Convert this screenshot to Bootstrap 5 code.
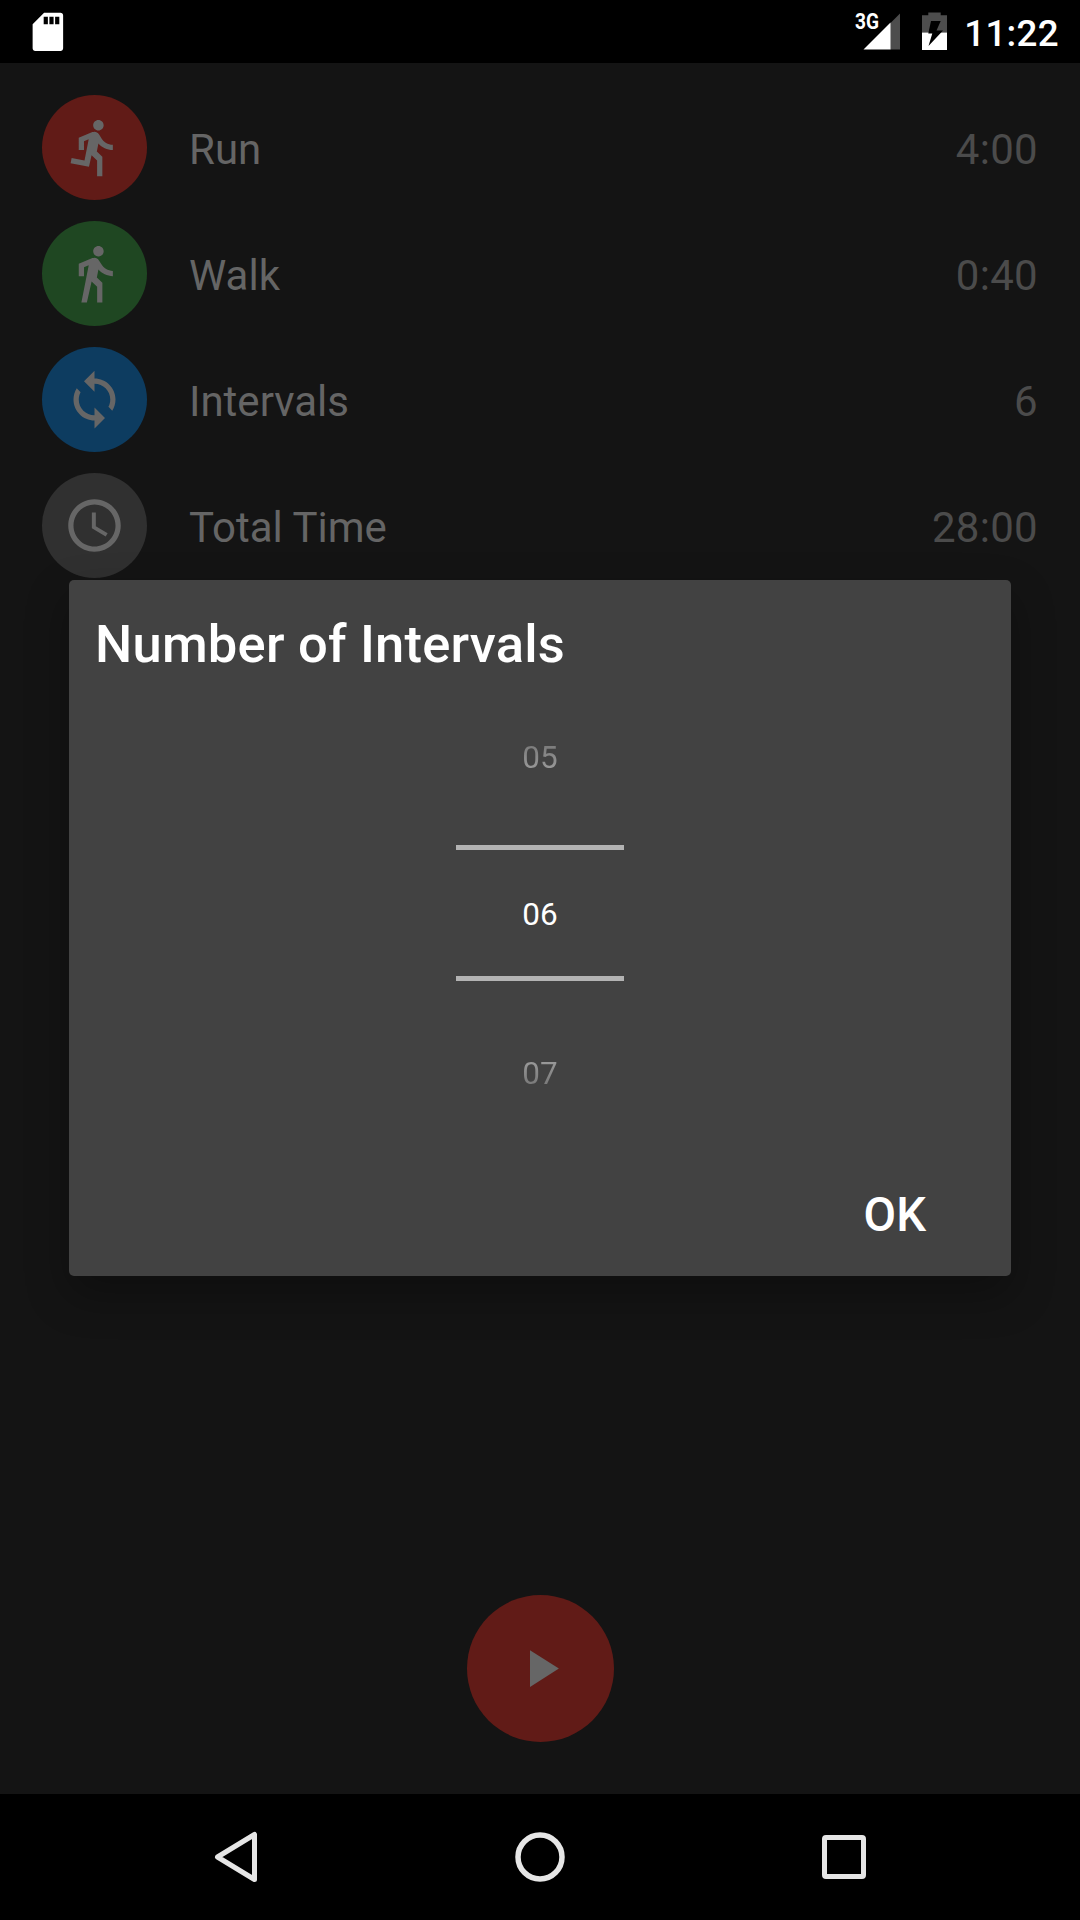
<!DOCTYPE html>
<html lang="en" data-bs-theme="dark">
<head>
<meta charset="utf-8">
<meta name="viewport" content="width=device-width, initial-scale=1">
<title>Interval Timer</title>
<link href="https://cdn.jsdelivr.net/npm/bootstrap@5.3.0/dist/css/bootstrap.min.css" rel="stylesheet">
<style>
  body { font-family: Roboto, "Liberation Sans", sans-serif; background: #000; color: #fff; }
  svg { display: block; flex: none; }
  .status-strip { height: 63px; padding: 0 21px 0 25px; background: #000; }
  .status-clock { font-size: 36.75px; font-weight: 500; line-height: 43px; margin-left: 17.5px; padding-top: 3px; letter-spacing: .3px; }
  .screen { background: #141414; }
  .timer-list { padding: 21px 42px 0; }
  .timer-row { height: 126px; }
  .timer-icon { width: 105px; height: 105px; margin-top: 1px; color: #666; }
  .bg-run { background: #611b17; }
  .bg-walk { background: #1f4722; }
  .bg-cycle { background: #0d3c60; }
  .bg-total { background: #303030; }
  .timer-name, .timer-value { font-size: 42px; line-height: 50px; padding-top: 5px; }
  .timer-name { margin-left: 42px; color: #656565; }
  .timer-value { color: #4b4b4b; letter-spacing: .3px; }
  .start-btn { width: 147px; height: 147px; margin-bottom: 52px; background: #611b17; color: #666; }
  .picker-layer { padding-bottom: 2px; }
  .picker-dialog { width: 942px; height: 696px; border-radius: 5px; background: #424242; box-shadow: 0 18px 44px rgba(0,0,0,.3); }
  .picker-title { font-size: 52.5px; line-height: 62px; font-weight: 500; letter-spacing: .22px; padding: 33px 26px 0; }
  .number-wheel { width: 168px; margin-top: 33px; font-size: 31.5px; line-height: 38px; }
  .wheel-side { height: 137px; padding-top: 31px; color: transparent; -webkit-background-clip: text; background-clip: text; }
  .wheel-prev { background-image: linear-gradient(#7b7b7b 37px, #9a9a9a 62px); }
  .wheel-next { padding-top: 74px; background-image: linear-gradient(#9a9a9a 80px, #767676 106px); }
  .wheel-current { height: 136px; padding-top: 4px; border-top: 5px solid #b3b3b3; border-bottom: 5px solid #b3b3b3; }
  .ok-btn { font-size: 47.25px; line-height: 56px; font-weight: 500; color: #fff; padding: 0; border: 0; margin: 0 85px 33px 0; }
  .nav-strip { height: 126px; background: #000; }
  .nav-key { width: 304px; }
</style>
</head>
<body>
<div class="vh-100 d-flex flex-column overflow-hidden">
  <header class="status-strip d-flex align-items-center flex-shrink-0">
    <svg width="45.75" height="45.75" viewBox="0 0 24 24" fill="#fff"><path d="M18.600 2H10L4 8v12.600c0 .8.6 1.400 1.400 1.400h13.200c.8 0 1.400-.6 1.400-1.400V3.400C20 2.600 19.400 2 18.600 2zM12 8H9.800V4H12zm3 0h-2.200V4H15zm3 0h-2.200V4H18z"/></svg>
    <svg class="ms-auto" width="50" height="51" viewBox="-4 -6 50 51">
      <path fill="#4d4d4d" d="M36 11.500 46 1.500V37.500H36z"/>
      <path fill="#fff" d="M9.500 37.500 36.500 10.500V37.500z"/>
      <text x="1" y="17.300" fill="#fff" font-family="Roboto, sans-serif" font-weight="700" font-size="21.500" textLength="24" lengthAdjust="spacingAndGlyphs">3G</text>
    </svg>
    <svg width="25" height="39" viewBox="0 0 25 39" style="margin-left:22px">
      <path fill="#4d4d4d" d="M6.300 3.200V.5H18.700V3.200H25V20.500H0V3.200z"/>
      <path fill="#fff" d="M0 20.500H25V38H0z"/>
      <path fill="#000" d="M9 9H18.700L14.500 18.500H21L6.500 34 10.300 21.500H6.300z"/>
    </svg>
    <div class="status-clock">11:22</div>
  </header>

  <main class="screen position-relative flex-grow-1 d-flex flex-column">
    <div class="timer-list">
      <div class="timer-row d-flex align-items-center">
        <div class="timer-icon bg-run rounded-circle d-flex align-items-center justify-content-center">
          <svg width="63" height="63" viewBox="0 0 24 24" fill="currentColor"><path d="M13.490 5.480c1.100 0 2-.9 2-2s-.9-2-2-2-2 .9-2 2 .9 2 2 2zm-3.600 13.900l1-4.400 2.100 2v6h2v-7.500l-2.100-2 .6-3c1.300 1.500 3.300 2.500 5.500 2.500v-2c-1.900 0-3.500-1-4.300-2.400l-1-1.600c-.4-.6-1-1-1.700-1-.3 0-.5.1-.8.1l-5.200 2.200v4.700h2v-3.400l1.800-.7-1.600 8.100-4.900-1-.4 2 7 1.400z"/></svg>
        </div>
        <div class="timer-name">Run</div><div class="timer-value ms-auto">4:00</div>
      </div>
      <div class="timer-row d-flex align-items-center">
        <div class="timer-icon bg-walk rounded-circle d-flex align-items-center justify-content-center">
          <svg width="63" height="63" viewBox="0 0 24 24" fill="currentColor"><path d="M13.500 5.500c1.100 0 2-.9 2-2s-.9-2-2-2-2 .9-2 2 .9 2 2 2zM9.800 8.900L7 23h2.100l1.800-8 2.100 2v6h2v-7.500l-2.100-2 .6-3C14.800 12 16.800 13 19 13v-2c-1.900 0-3.500-1-4.300-2.400l-1-1.600c-.4-.6-1-1-1.700-1-.3 0-.5.1-.8.1L6 8.300V13h2V9.600l1.800-.7"/></svg>
        </div>
        <div class="timer-name">Walk</div><div class="timer-value ms-auto">0:40</div>
      </div>
      <div class="timer-row d-flex align-items-center">
        <div class="timer-icon bg-cycle rounded-circle d-flex align-items-center justify-content-center">
          <svg width="63" height="63" viewBox="0 0 24 24" fill="currentColor"><path d="M12 4V1L8 5l4 4V6c3.310 0 6 2.690 6 6 0 1.010-.25 1.970-.7 2.800l1.460 1.460C19.540 15.030 20 13.570 20 12c0-4.420-3.580-8-8-8zm0 14c-3.310 0-6-2.690-6-6 0-1.010.25-1.970.7-2.800L5.240 7.740C4.460 8.970 4 10.430 4 12c0 4.420 3.580 8 8 8v3l4-4-4-4v3z"/></svg>
        </div>
        <div class="timer-name">Intervals</div><div class="timer-value ms-auto">6</div>
      </div>
      <div class="timer-row d-flex align-items-center">
        <div class="timer-icon bg-total rounded-circle d-flex align-items-center justify-content-center">
          <svg width="63" height="63" viewBox="0 0 24 24" fill="currentColor"><path d="M11.990 2C6.470 2 2 6.480 2 12s4.470 10 9.990 10C17.520 22 22 17.520 22 12S17.520 2 11.990 2zM12 20c-4.420 0-8-3.580-8-8s3.580-8 8-8 8 3.580 8 8-3.580 8-8 8z"/><path d="M12.500 7H11v6l5.250 3.150.75-1.230-4.500-2.670z"/></svg>
        </div>
        <div class="timer-name">Total Time</div><div class="timer-value ms-auto">28:00</div>
      </div>
    </div>

    <button class="start-btn btn p-0 border-0 rounded-circle mt-auto mx-auto d-flex align-items-center justify-content-center" aria-label="Start">
      <svg width="63" height="63" viewBox="0 0 24 24" fill="currentColor"><path d="M8 5v14l11-7z"/></svg>
    </button>

    <div class="picker-layer position-absolute top-0 start-0 w-100 h-100 d-flex align-items-center justify-content-center">
      <section class="picker-dialog d-flex flex-column" role="dialog">
        <h1 class="picker-title m-0">Number of Intervals</h1>
        <div class="number-wheel mx-auto text-center">
          <div class="wheel-side wheel-prev">05</div>
          <div class="wheel-current d-flex align-items-center justify-content-center">06</div>
          <div class="wheel-side wheel-next">07</div>
        </div>
        <button class="ok-btn btn mt-auto align-self-end">OK</button>
      </section>
    </div>
  </main>

  <nav class="nav-strip d-flex align-items-center justify-content-center flex-shrink-0">
    <div class="nav-key d-flex justify-content-center"><svg width="52" height="52" viewBox="0 0 52 52" fill="none" stroke="#e6e6e6" stroke-width="5" stroke-linejoin="round"><path d="M44.500 3.500V48.500L7.500 26z"/></svg></div>
    <div class="nav-key d-flex justify-content-center"><svg width="52" height="52" viewBox="0 0 52 52" fill="none" stroke="#e6e6e6" stroke-width="5.500"><circle cx="26" cy="26" r="22"/></svg></div>
    <div class="nav-key d-flex justify-content-center"><svg width="52" height="52" viewBox="0 0 52 52" fill="none" stroke="#e6e6e6" stroke-width="5"><rect x="6.500" y="6.500" width="39" height="39" rx="1.500"/></svg></div>
  </nav>
</div>
<script src="https://cdn.jsdelivr.net/npm/bootstrap@5.3.0/dist/js/bootstrap.bundle.min.js"></script>
</body>
</html>
